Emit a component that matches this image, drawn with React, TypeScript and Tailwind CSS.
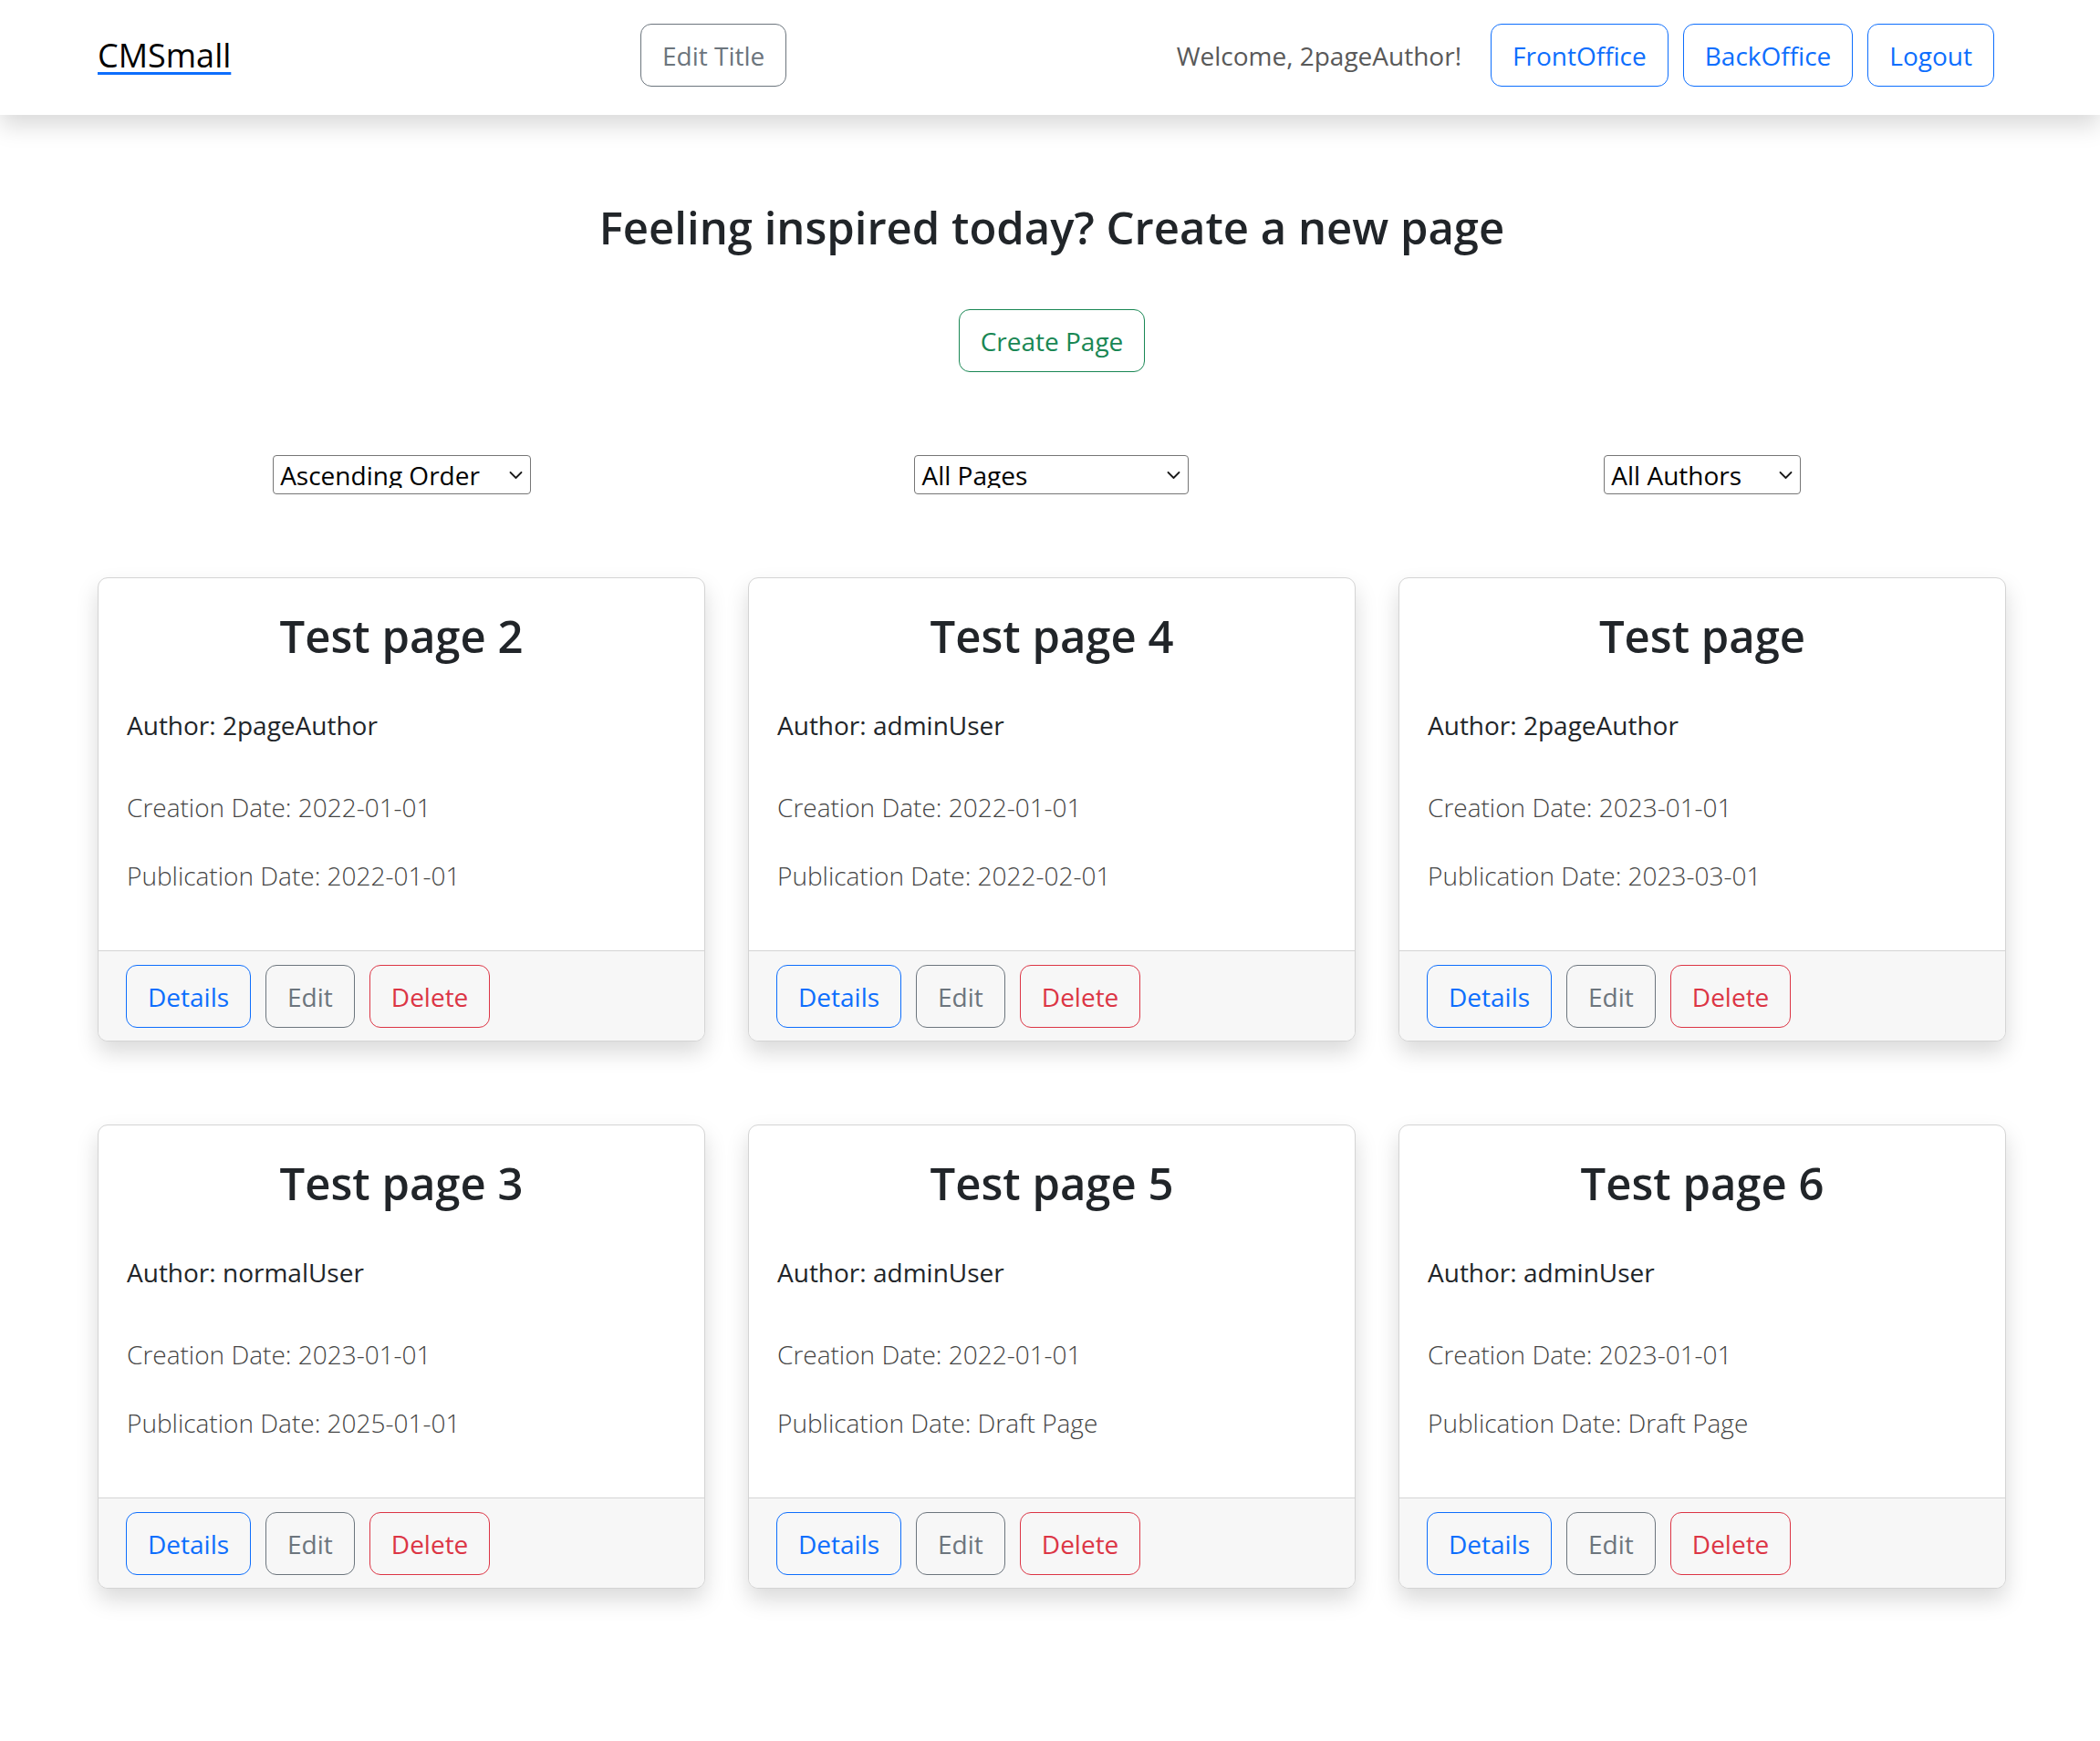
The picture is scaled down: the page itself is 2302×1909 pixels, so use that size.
import { useState } from 'react';

type Page = {
  id: number;
  title: string;
  author: string;
  created: string;
  published: string;
};

const pages: Page[] = [
  { id: 2, title: 'Test page 2', author: '2pageAuthor', created: '2022-01-01', published: '2022-01-01' },
  { id: 4, title: 'Test page 4', author: 'adminUser', created: '2022-01-01', published: '2022-02-01' },
  { id: 1, title: 'Test page', author: '2pageAuthor', created: '2023-01-01', published: '2023-03-01' },
  { id: 3, title: 'Test page 3', author: 'normalUser', created: '2023-01-01', published: '2025-01-01' },
  { id: 5, title: 'Test page 5', author: 'adminUser', created: '2022-01-01', published: 'Draft Page' },
  { id: 6, title: 'Test page 6', author: 'adminUser', created: '2023-01-01', published: 'Draft Page' },
];

const btn =
  'inline-flex items-center h-[69px] px-[23px] rounded-[12px] border-[1.5px] bg-transparent text-[28px] leading-none';

function Chevron() {
  return (
    <svg
      className="pointer-events-none absolute right-[9px] top-1/2 -translate-y-1/2 w-[15px] h-[9px]"
      viewBox="0 0 15 9"
      fill="none"
      stroke="#1a1a1a"
      strokeWidth={1.8}
      strokeLinecap="round"
      strokeLinejoin="round"
    >
      <path d="M1.5 1.5l6 6 6-6" />
    </svg>
  );
}

function Filter({ width, options }: { width: string; options: string[] }) {
  const [value, setValue] = useState(options[0]);
  return (
    <div className={`relative ${width}`}>
      <select
        value={value}
        onChange={(e) => setValue(e.target.value)}
        className="appearance-none w-full h-[43px] pl-[7px] pr-[30px] border-[1.5px] border-[#767676] rounded-[4px] bg-white text-[28px] leading-none text-black outline-none"
      >
        {options.map((o) => (
          <option key={o}>{o}</option>
        ))}
      </select>
      <Chevron />
    </div>
  );
}

function PageCard({ page }: { page: Page }) {
  return (
    <div className="flex flex-col bg-white border border-[#d4d4d4] rounded-[11px] shadow-[0_12px_24px_rgba(0,0,0,0.15)] overflow-hidden">
      <div className="px-[31px] pt-[33px] pb-[61px]">
        <h2 className="text-center text-[49px] leading-[60px] font-semibold text-[#212529]">{page.title}</h2>
        <p className="mt-[47px] text-[28px] leading-[42px] text-[#212529]">Author: {page.author}</p>
        <p className="mt-[48px] text-[28px] leading-[42px] font-light text-[#454545]">Creation Date: {page.created}</p>
        <p className="mt-[33px] text-[28px] leading-[42px] font-light text-[#454545]">
          Publication Date: {page.published}
        </p>
      </div>
      <div className="flex gap-[16px] px-[30px] pt-[15px] pb-[14px] bg-[#f7f7f7] border-t border-[#d4d4d4]">
        <button type="button" className={`${btn} border-[#0d6efd] text-[#0d6efd]`}>
          Details
        </button>
        <button type="button" className={`${btn} border-[#6c757d] text-[#6c757d]`}>
          Edit
        </button>
        <button type="button" className={`${btn} border-[#dc3545] text-[#dc3545]`}>
          Delete
        </button>
      </div>
    </div>
  );
}

export default function App() {
  return (
    <div className="min-h-screen bg-white font-['Open_Sans','Noto_Sans',sans-serif] text-[#212529] pb-[168px]">
      <nav className="relative z-10 h-[126px] bg-white shadow-[0_12px_24px_rgba(0,0,0,0.15)]">
        <div className="flex items-start h-full pl-[107px] pr-[103px] pt-[26px]">
          <div className="w-[595px] h-[69px] flex items-center">
            <a
              href="#"
              className="text-[36px] leading-none text-black underline decoration-[#0d6efd] decoration-[3px] underline-offset-[5px]"
            >
              CMSmall
            </a>
          </div>
          <button type="button" className={`${btn} border-[#6c757d] text-[#6c757d]`}>
            Edit Title
          </button>
          <div className="flex-1" />
          <div className="flex items-center mr-[13px]">
            <span className="text-[28px] text-[#595959] mr-[32px]">Welcome, 2pageAuthor!</span>
            <div className="flex gap-[16px]">
              <button type="button" className={`${btn} border-[#0d6efd] text-[#0d6efd]`}>
                FrontOffice
              </button>
              <button type="button" className={`${btn} border-[#0d6efd] text-[#0d6efd]`}>
                BackOffice
              </button>
              <button type="button" className={`${btn} border-[#0d6efd] text-[#0d6efd]`}>
                Logout
              </button>
            </div>
          </div>
        </div>
      </nav>

      <main className="pl-[107px] pr-[103px]">
        <h1 className="mt-[93px] text-center text-[49px] leading-[60px] font-semibold">
          Feeling inspired today? Create a new page
        </h1>
        <div className="mt-[60px] flex justify-center">
          <button type="button" className={`${btn} h-[68px] border-[#198754] text-[#198754]`}>
            Create Page
          </button>
        </div>

        <div className="mt-[91px] grid grid-cols-3">
          <div className="flex justify-center pr-[30px]">
            <Filter width="w-[283px]" options={['Ascending Order', 'Descending Order']} />
          </div>
          <div className="flex justify-center">
            <Filter width="w-[301px]" options={['All Pages', 'Published Pages', 'Draft Pages', 'Scheduled Pages']} />
          </div>
          <div className="flex justify-center pl-[32px]">
            <Filter width="w-[216px]" options={['All Authors', '2pageAuthor', 'adminUser', 'normalUser']} />
          </div>
        </div>

        <div className="mt-[91px] grid grid-cols-3 gap-x-[47px] gap-y-[91px]">
          {pages.map((p) => (
            <PageCard key={p.id} page={p} />
          ))}
        </div>
      </main>
    </div>
  );
}
